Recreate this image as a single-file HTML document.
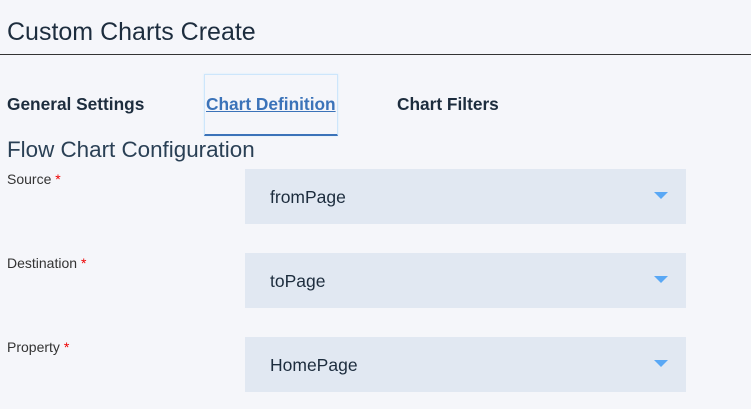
<!DOCTYPE html>
<html><head><style>
body{margin:0;width:751px;height:409px;background:#f5f6fa;font-family:"Liberation Sans",Arial,sans-serif;position:relative;overflow:hidden;color:#1d2d3e}
.a{position:absolute}
h1{position:absolute;left:7px;top:18px;margin:0;font-size:25px;font-weight:normal;color:#1d2d3e}
.line{left:0;top:54px;width:751px;height:1px;background:#333}
.tab{font-size:17.3px;font-weight:bold;top:94px}
.tabbox{left:204px;top:74px;width:132px;height:59px;border:1px solid #cde6fb;box-shadow:0 0 2px #d6ecfd;border-bottom:2px solid #3b73b9}
.lbl{font-size:14px;left:7px;color:#333}
.lbl b{color:#e00;font-weight:normal}
.sel{left:245px;width:441px;height:55px;background:#e1e8f2;font-size:17.5px;color:#1d2d3e}
.sel span{position:absolute;left:25px;top:18px}
.tri{position:absolute;left:409px;top:23px;width:0;height:0;border-left:7px solid transparent;border-right:7px solid transparent;border-top:7px solid #5aa8f5}
</style></head><body>
<h1>Custom Charts Create</h1>
<div class="a line"></div>
<div class="a tab" style="left:7px">General Settings</div>
<div class="a tabbox"></div>
<div class="a tab" style="left:206px;color:#3b73b9;text-decoration:underline">Chart Definition</div>
<div class="a tab" style="left:397px">Chart Filters</div>
<div class="a" style="left:7px;top:137px;font-size:22.4px;color:#2a4055">Flow Chart Configuration</div>
<div class="a lbl" style="top:171px">Source <b>*</b></div>
<div class="a lbl" style="top:255px">Destination <b>*</b></div>
<div class="a lbl" style="top:339px">Property <b>*</b></div>
<div class="a sel" style="top:169px"><span>fromPage</span><i class="tri"></i></div>
<div class="a sel" style="top:253px"><span>toPage</span><i class="tri"></i></div>
<div class="a sel" style="top:337px"><span>HomePage</span><i class="tri"></i></div>
</body></html>
